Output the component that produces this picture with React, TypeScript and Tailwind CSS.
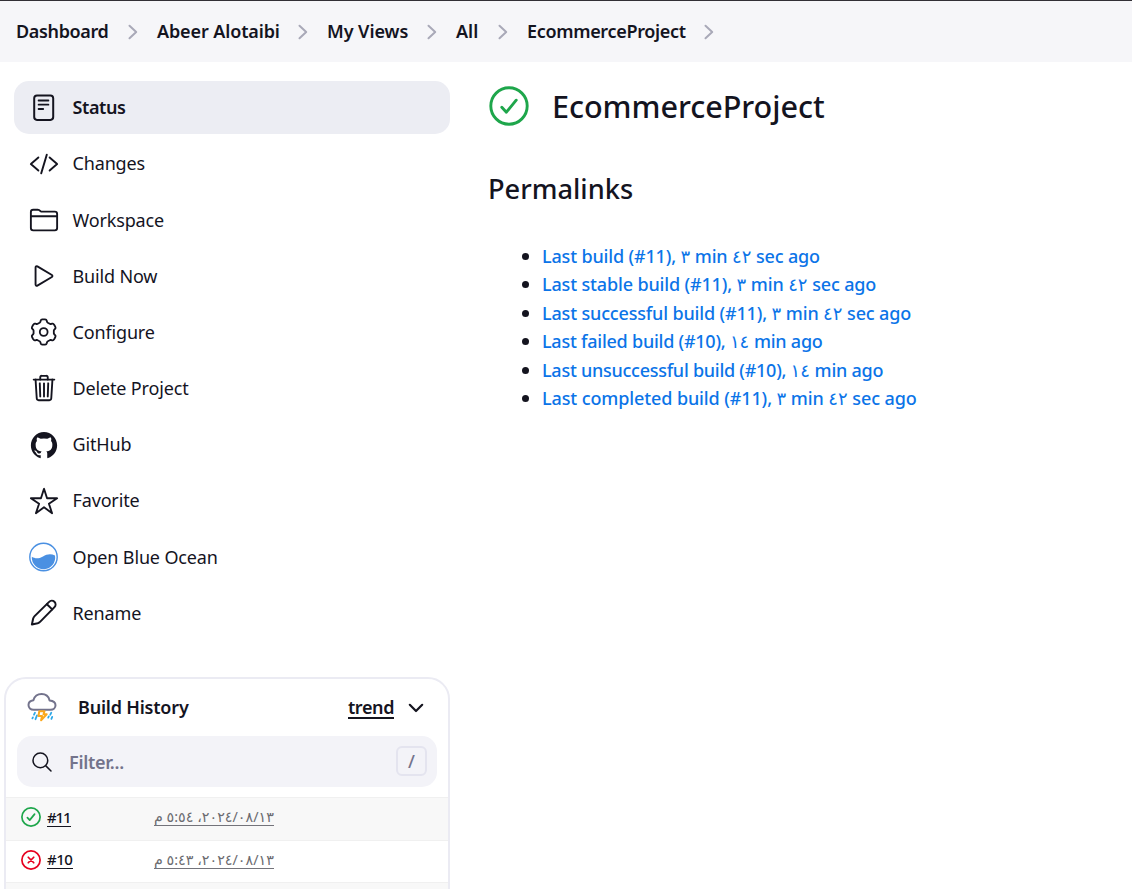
import type { ReactNode } from 'react';
import {
  IoCodeSlashOutline,
  IoFolderOutline,
  IoLogoGithub,
  IoPlayOutline,
  IoSearchOutline,
  IoStarOutline,
  IoTrashOutline,
} from 'react-icons/io5';

function StatusIcon() {
  return (
    <svg viewBox="0 0 30 30" className="size-[30px]" fill="none" stroke="currentColor" strokeLinecap="round">
      <rect x="5.200" y="3.500" width="19" height="24.400" rx="2.8" strokeWidth="2" />
      <path d="M9.600 8.500h9.800M9.600 12.700h9.800M9.600 17h4.600" strokeWidth="1.8" />
    </svg>
  );
}

function gearPath() {
  const points: string[] = [];
  for (let deg = 0; deg < 360; deg += 3) {
    const a = (deg * Math.PI) / 180;
    const r = 11.4 + 1.3 * Math.tanh(2.6 * (Math.cos(6 * a) + 0.1));
    points.push(`${(14.7 + r * Math.sin(a)).toFixed(2)} ${(15 - r * Math.cos(a)).toFixed(2)}`);
  }
  return `M${points.join('L')}Z`;
}

function GearIcon() {
  return (
    <svg viewBox="0 0 30 30" className="size-[30px]" fill="none" stroke="currentColor" strokeLinejoin="round" strokeWidth="1.8">
      <path d={gearPath()} />
      <circle cx="14.700" cy="15" r="3.9" />
    </svg>
  );
}

function OceanIcon() {
  return (
    <svg viewBox="0.500 0 30 30" className="size-[30px]">
      <circle cx="15" cy="15" r="13.7" fill="#fff" stroke="#4a90e2" strokeWidth="1.400" />
      <path d="M3.300 14.800C7 17 10.500 16.600 14.500 14.400C18.500 12 22.500 11.700 26.500 13.400A11.700 11.700 0 1 1 3.300 14.800Z" fill="#4a90e2" />
    </svg>
  );
}

function PencilIcon() {
  return (
    <svg viewBox="0.500 0 30 30" className="size-[30px]" fill="none" stroke="currentColor" strokeWidth="2" strokeLinejoin="round" strokeLinecap="round">
      <path d="M3.400 26.500L4.600 20.800Q5 19.200 6.100 18.100L20.600 3.900A3.500 3.500 0 0 1 26 9.100L11.800 23.600Q10.600 24.800 9.200 25.200Z" />
      <path d="M18.400 6.200L23.700 11.400" />
    </svg>
  );
}

function StormIcon() {
  return (
    <svg viewBox="0 0.800 30 30" className="size-[30px]" fill="none" strokeLinecap="round" strokeLinejoin="round">
      <path d="M6.700 17.600C3.500 17.600 1.500 15.500 1.500 12.900C1.500 10.200 3.500 8.500 6.400 8.100C7.500 4.300 10.800 1.900 14.600 1.900C18.600 1.900 21.600 4.300 22.600 8.200C26.300 8.500 28.500 10.200 28.500 13C28.500 15.600 26.500 17.600 23.500 17.600Z" stroke="#73738c" strokeWidth="2" />
      <path d="M8 20.500l-1 2M5.900 25.200l-.5 1M10 23.200l-1.500 3.800M24.300 20.500l-1 2M21.800 24.200l-.6 1.200M25.200 24.700l-.8 2" stroke="#2ea8e8" strokeWidth="1.800" />
      <path d="M12.300 19h5.200l-1 3.100h3.200l-5.600 5.900 1-4.300h-3.600z" stroke="#fba81c" strokeWidth="2" />
    </svg>
  );
}

function Ball({ ok, size, stroke }: { ok: boolean; size: string; stroke: number }) {
  return (
    <svg viewBox="0 0 40 40" className={`${size} ${ok ? 'text-[#1ea64b]' : 'text-[#e6001f]'} shrink-0`} fill="none" stroke="currentColor" strokeWidth={stroke} strokeLinecap="round" strokeLinejoin="round">
      <circle cx="20" cy="20" r="18.200" />
      {ok ? <path d="M12.800 21.200l4.600 5L27.200 14.200" /> : <path d="M14.500 14.500l11 11M25.500 14.500l-11 11" />}
    </svg>
  );
}

function Chevron() {
  return (
    <svg viewBox="0 0 10 16" className="h-4 w-[10px] shrink-0" fill="none" stroke="#a9a9b8" strokeWidth="2" strokeLinecap="round" strokeLinejoin="round">
      <path d="M1.500 1.800L8.200 8L1.500 14.200" />
    </svg>
  );
}

const crumbs = [
  { label: 'Dashboard', fit: 'w-[93px] tracking-[-0.350px]' },
  { label: 'Abeer Alotaibi', fit: 'w-[122px] tracking-[-0.120px]' },
  { label: 'My Views', fit: 'w-[81px] tracking-[-0.050px]' },
  { label: 'All', fit: 'w-[23px]' },
  { label: 'EcommerceProject', fit: 'w-[158px] tracking-[-0.320px]' },
];

const tasks: { label: string; icon: ReactNode }[] = [
  { label: 'Status', icon: <StatusIcon /> },
  { label: 'Changes', icon: <IoCodeSlashOutline /> },
  { label: 'Workspace', icon: <IoFolderOutline /> },
  { label: 'Build Now', icon: <IoPlayOutline /> },
  { label: 'Configure', icon: <GearIcon /> },
  { label: 'Delete Project', icon: <IoTrashOutline /> },
  { label: 'GitHub', icon: <IoLogoGithub /> },
  { label: 'Favorite', icon: <IoStarOutline /> },
  { label: 'Open Blue Ocean', icon: <OceanIcon /> },
  { label: 'Rename', icon: <PencilIcon /> },
];

const minSec = '٣ min ٤٢ sec ago';
const permalinks = [
  { text: `Last build (#11), ${minSec}`, fit: 'tracking-[-0.160px]' },
  { text: `Last stable build (#11), ${minSec}`, fit: 'tracking-[-0.150px]' },
  { text: `Last successful build (#11), ${minSec}`, fit: 'tracking-[-0.160px]' },
  { text: 'Last failed build (#10), ١٤ min ago', fit: 'tracking-[-0.240px]' },
  { text: 'Last unsuccessful build (#10), ١٤ min ago', fit: 'tracking-[-0.260px]' },
  { text: `Last completed build (#11), ${minSec}`, fit: 'tracking-[-0.110px]' },
];

const builds = [
  { id: '#11', ok: true, fit: 'tracking-[-1.100px]', date: '١٣\u200f/٠٨\u200f/٢٠٢٤، ٥:٥٤ م' },
  { id: '#10', ok: false, fit: 'tracking-[-0.450px]', date: '١٣\u200f/٠٨\u200f/٢٠٢٤، ٥:٤٣ م' },
];

export default function App() {
  return (
    <div className="flex h-[889px] flex-col overflow-hidden bg-white font-['Noto_Sans','DejaVu_Sans',sans-serif] text-[18px] text-[#14141f]">
      <nav className="flex h-[62px] shrink-0 items-center gap-[19px] border-t border-[#323036] bg-[#f6f6f9] pl-4 font-semibold">
        {crumbs.map((c) => (
          <div key={c.label} className="flex items-center gap-[19px]">
            <span className={`${c.fit} whitespace-nowrap`}>{c.label}</span>
            <Chevron />
          </div>
        ))}
      </nav>

      <div className="flex min-h-0 flex-1">
        <aside className="w-[450px] shrink-0 pt-[19px]">
          <div className="ml-[14px] flex flex-col gap-[3.400px]">
            {tasks.map((t, i) => (
              <a
                key={t.label}
                className={`flex h-[52.800px] shrink-0 items-center gap-[14px] rounded-[15px] pl-[14.500px] ${i === 0 ? 'bg-[#ecedf3] font-semibold tracking-[-0.400px]' : 'tracking-[-0.150px]'}`}
              >
                <span className="text-[30px]">{t.icon}</span>
                <span className="pt-[0.500px]">{t.label}</span>
              </a>
            ))}
          </div>

          <section className="mt-[38px] ml-[4px] h-[240px] w-[446px] rounded-t-[22px] border-2 border-[#ebebf3]">
            <header className="flex h-[57px] items-center pr-[24px] pl-[21px] font-semibold tracking-[-0.200px]">
              <StormIcon />
              <span className="ml-[21px]">Build History</span>
              <span className="mr-[14px] ml-auto border-b-2 border-[#14141f] leading-[20px] tracking-[-0.400px]">trend</span>
              <svg viewBox="0 0 16 10" className="h-[10px] w-4" fill="none" stroke="currentColor" strokeWidth="2.200" strokeLinecap="round" strokeLinejoin="round">
                <path d="M1.800 1.800L8 8L14.200 1.800" />
              </svg>
            </header>
            <div className="mx-[11px] flex h-[51px] items-center rounded-[15px] bg-[#f3f3f8] pr-[10px] pl-[13px] font-semibold text-[#73738c]">
              <IoSearchOutline className="size-6 text-[#14141f]" />
              <span className="ml-[15px] pt-px tracking-[-0.300px]">Filter...</span>
              <kbd className="mb-px ml-auto flex h-[30px] w-[31px] items-center justify-center rounded-[6px] border-2 border-[#e4e4ef] font-['Noto_Sans',sans-serif] text-[18px] font-medium">/</kbd>
            </div>
            <div className="mt-[10px]">
              {builds.map((b) => (
                <div key={b.id} className="flex h-[42.500px] items-center border-t border-[#f0f0f0] pb-[4px] pl-[15px] text-[15px] odd:bg-[#f8f8f8]">
                  <Ball ok={b.ok} size="size-5" stroke={3.4} />
                  <span className="ml-[6px] w-[107px] leading-[18px]">
                    <span className={`${b.fit} inline-block border-b border-[#14141f] font-medium`}>{b.id}</span>
                  </span>
                  <span className="border-b border-[#73737a] text-[14.300px] leading-[17px] text-[#6b6b70]">{b.date}</span>
                </div>
              ))}
              <div className="h-[42px] border-t border-[#f0f0f0] bg-[#f8f8f8]" />
            </div>
          </section>
        </aside>

        <main className="flex flex-col items-start pl-[38px]">
          <div className="mt-[22px] flex h-[44px] items-center pl-[1px]">
            <Ball ok size="size-[40px]" stroke={2.9} />
            <h1 className="ml-[23px] text-[30.600px] leading-[44px] font-medium tracking-[-0.050px]">EcommerceProject</h1>
          </div>
          <h2 className="mt-[42px] text-[27.200px] leading-[38px] font-medium">Permalinks</h2>
          <ul className="mt-[34px] ml-[34px] font-medium text-[#0b74e8]">
            {permalinks.map((p) => (
              <li key={p.text} className="flex h-[28.500px] items-center">
                <span className="size-[7px] rounded-full bg-[#14141f]" />
                <a className={`${p.fit} ml-[13px] whitespace-nowrap`}>{p.text}</a>
              </li>
            ))}
          </ul>
        </main>
      </div>
    </div>
  );
}
